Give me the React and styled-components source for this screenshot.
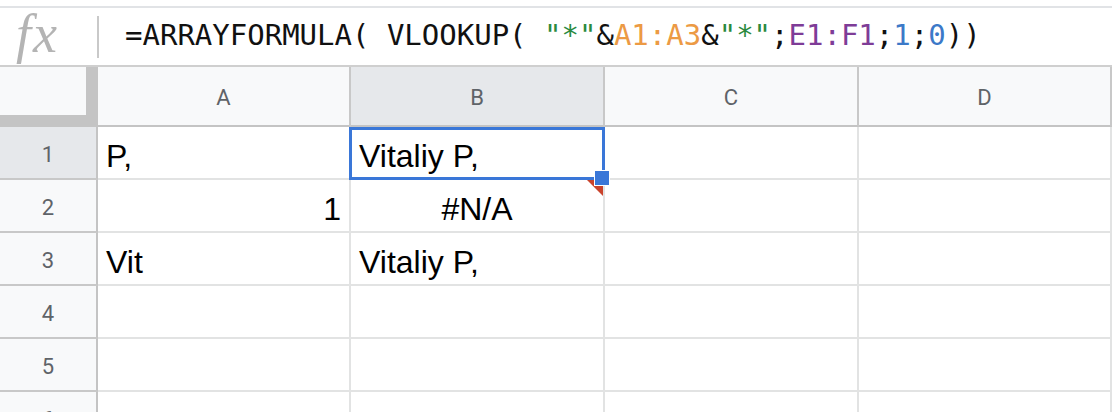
import React from 'react';
import styled, { createGlobalStyle, css } from 'styled-components';

// Formula tokens, coloured like the Sheets formula editor
const FORMULA = [
	{ text: '=ARRAYFORMULA( VLOOKUP( ' },
	{ text: '"*"', kind: 'string' },
	{ text: '&' },
	{ text: 'A1:A3', kind: 'range1' },
	{ text: '&' },
	{ text: '"*"', kind: 'string' },
	{ text: ';' },
	{ text: 'E1:F1', kind: 'range2' },
	{ text: ';' },
	{ text: '1', kind: 'number' },
	{ text: ';' },
	{ text: '0', kind: 'number' },
	{ text: '))' },
];

const TOKEN_COLORS = {
	string: '#2b8a3e',
	range1: '#ec9a44',
	range2: '#7e3c97',
	number: '#3c79c8',
};

const COLUMNS = ['A', 'B', 'C', 'D'];

const ROWS = [
	{ A: { value: 'P,' }, B: { value: 'Vitaliy P,' } },
	{ A: { value: '1', align: 'right' }, B: { value: '#N/A', align: 'center', error: true } },
	{ A: { value: 'Vit' }, B: { value: 'Vitaliy P,' } },
	{},
	{},
	{},
];

const SELECTED = { row: 1, col: 'B' };

const App = () => (
	<Page>
		<GlobalStyle />
		<FormulaBar>
			<FxBox>fx</FxBox>
			<Divider />
			<Formula>
				{FORMULA.map((t, i) => (
					<Token key={i} $kind={t.kind}>
						{t.text}
					</Token>
				))}
			</Formula>
		</FormulaBar>
		<Sheet>
			<Corner />
			{COLUMNS.map(c => (
				<ColumnHeader key={c} $active={c === SELECTED.col}>
					{c}
				</ColumnHeader>
			))}
			{ROWS.map((row, r) => {
				const n = r + 1;
				return (
					<React.Fragment key={n}>
						<RowHeader $active={n === SELECTED.row}>{n}</RowHeader>
						{COLUMNS.map(c => {
							const cell = row[c] || {};
							const selected = n === SELECTED.row && c === SELECTED.col;
							return (
								<Cell key={c} $align={cell.align} $error={cell.error} $selected={selected}>
									{cell.value}
									{selected && (
										<Selection>
											<FillHandle />
										</Selection>
									)}
								</Cell>
							);
						})}
					</React.Fragment>
				);
			})}
		</Sheet>
	</Page>
);

export default App;

// Styled components
const GlobalStyle = createGlobalStyle`
	html, body {
		margin: 0;
		padding: 0;
		background: #fff;
		overflow: hidden;
	}
	* {
		box-sizing: border-box;
	}
`;

const Page = styled.div`
	width: 1112px;
	height: 412px;
	padding-top: 6px;
	overflow: hidden;
	background: #fff;
`;

const FormulaBar = styled.div`
	display: flex;
	align-items: center;
	height: 61px;
	border-top: 2px solid #e1e3e6;
	border-bottom: 2px solid #cfcfcf;
`;

const FxBox = styled.div`
	width: 97px;
	text-align: center;
	font-family: 'Liberation Serif', serif;
	font-style: italic;
	font-size: 54px;
	line-height: 1;
	color: #b4b4b4;
	letter-spacing: 2px;
	padding-right: 22px;
	padding-bottom: 6px;
`;

const Divider = styled.div`
	width: 2px;
	height: 42px;
	background: #c9c9c9;
`;

const Formula = styled.div`
	margin-left: 26px;
	font-family: 'DejaVu Sans Mono', 'Liberation Mono', monospace;
	font-size: 29px;
	line-height: 1;
	color: #111;
	white-space: pre;
	padding-bottom: 2px;
`;

const Token = styled.span`
	color: ${props => TOKEN_COLORS[props.$kind] || '#111'};
`;

const Sheet = styled.div`
	display: grid;
	grid-template-columns: 98px 253px 254px 254px 253px;
	grid-template-rows: 60px repeat(6, 53px);
`;

const Corner = styled.div`
	background: #f8f9fa;
	border-right: 12px solid #c4c4c4;
	border-bottom: 12px solid #c4c4c4;
`;

const headerText = css`
	font-family: Roboto, 'Liberation Sans', sans-serif;
	font-size: 22px;
	color: #5f6368;
	display: flex;
	align-items: center;
	justify-content: center;
`;

const ColumnHeader = styled.div`
	${headerText};
	background: ${props => (props.$active ? '#e6e8eb' : '#f8f9fa')};
	border-right: 2px solid #c8c8c8;
	border-bottom: 2px solid #c4c4c4;
	padding-top: 2px;
`;

const RowHeader = styled.div`
	${headerText};
	background: ${props => (props.$active ? '#e6e8eb' : '#f8f9fa')};
	border-right: 2px solid #c4c4c4;
	border-bottom: 2px solid #c8c8c8;
	padding-top: 4px;
`;

const Cell = styled.div`
	position: relative;
	z-index: ${props => (props.$selected ? 2 : 'auto')};
	display: flex;
	align-items: flex-end;
	justify-content: ${props =>
		props.$align === 'right' ? 'flex-end' : props.$align === 'center' ? 'center' : 'flex-start'};
	padding: 0 8px 6px 8px;
	background: #fff;
	border-right: 2px solid #e2e3e3;
	border-bottom: 2px solid #e2e3e3;
	font-family: 'Liberation Sans', Arial, sans-serif;
	font-size: 32px;
	line-height: 32px;
	color: #000;
	white-space: nowrap;

	${props =>
		props.$error &&
		css`
			&::after {
				content: '';
				position: absolute;
				top: 0;
				right: 0;
				width: 0;
				height: 0;
				border-top: 16px solid #c9432c;
				border-left: 16px solid transparent;
			}
		`}
`;

const Selection = styled.div`
	position: absolute;
	top: 0;
	left: -2px;
	right: -2px;
	bottom: -2px;
	border: 3px solid #3a77d8;
	pointer-events: none;
`;

const FillHandle = styled.div`
	position: absolute;
	right: -8px;
	bottom: -9px;
	width: 16px;
	height: 16px;
	background: #3a77d8;
	border: 1px solid #fff;
`;
